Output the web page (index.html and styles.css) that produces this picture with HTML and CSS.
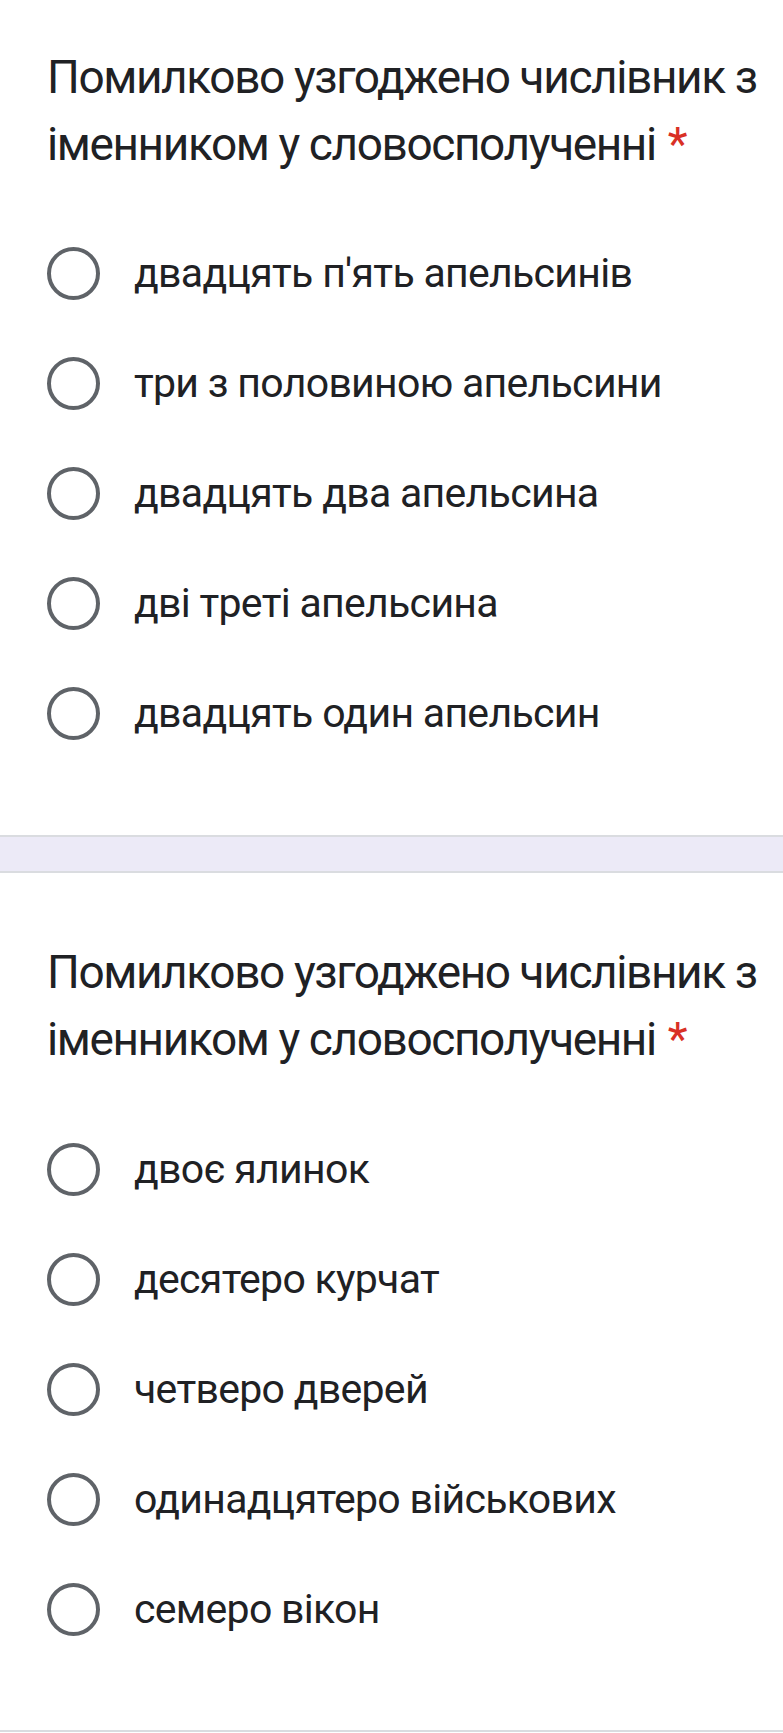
FILE: index.html
```html
<!DOCTYPE html>
<html lang="uk">
<head>
<meta charset="utf-8">
<link rel="stylesheet" href="styles.css">
</head>
<body>
<section class="question q1">
  <div class="title">Помилково узгоджено числівник з іменником у словосполученні <span class="req">*</span></div>
  <div class="options">
    <div class="option"><span class="radio"></span><span class="label">двадцять п'ять апельсинів</span></div>
    <div class="option"><span class="radio"></span><span class="label">три з половиною апельсини</span></div>
    <div class="option"><span class="radio"></span><span class="label">двадцять два апельсина</span></div>
    <div class="option"><span class="radio"></span><span class="label">дві треті апельсина</span></div>
    <div class="option"><span class="radio"></span><span class="label">двадцять один апельсин</span></div>
  </div>
</section>
<div class="band"></div>
<section class="question q2">
  <div class="title">Помилково узгоджено числівник з іменником у словосполученні <span class="req">*</span></div>
  <div class="options">
    <div class="option"><span class="radio"></span><span class="label">двоє ялинок</span></div>
    <div class="option"><span class="radio"></span><span class="label">десятеро курчат</span></div>
    <div class="option"><span class="radio"></span><span class="label">четверо дверей</span></div>
    <div class="option"><span class="radio"></span><span class="label">одинадцятеро військових</span></div>
    <div class="option"><span class="radio"></span><span class="label">семеро вікон</span></div>
  </div>
</section>
</body>
</html>
```
FILE: styles.css
```css
html, body {
  margin: 0;
  padding: 0;
  background: #ffffff;
}
body {
  width: 783px;
  height: 1733px;
  overflow: hidden;
  font-family: Roboto, "Noto Sans", sans-serif;
  color: #202124;
}
.question {
  padding: 44px 20px 0 47px;
  border-bottom: 2px solid #dadce0;
}
.q1 {
  padding-bottom: 67px;
}
.q2 {
  padding-top: 66px;
  padding-bottom: 66px;
}
.title {
  font-size: 46px;
  line-height: 67px;
  letter-spacing: -1.4px;
  width: 720px;
}
.req {
  color: #d93025;
  margin-left: 2px;
}
.options {
  margin-top: 40px;
  display: flex;
  flex-direction: column;
}
.q2 .options {
  margin-top: 41px;
}
.option {
  height: 110px;
  display: flex;
  align-items: center;
}
.radio {
  width: 45px;
  height: 45px;
  border: 4.5px solid #5f6368;
  border-radius: 50%;
  flex: none;
}
.label {
  margin-left: 34px;
  font-size: 41px;
  letter-spacing: -0.7px;
}
.band {
  height: 34px;
  background: #eceaf7;
  border-bottom: 2px solid #dadce0;
}
```
